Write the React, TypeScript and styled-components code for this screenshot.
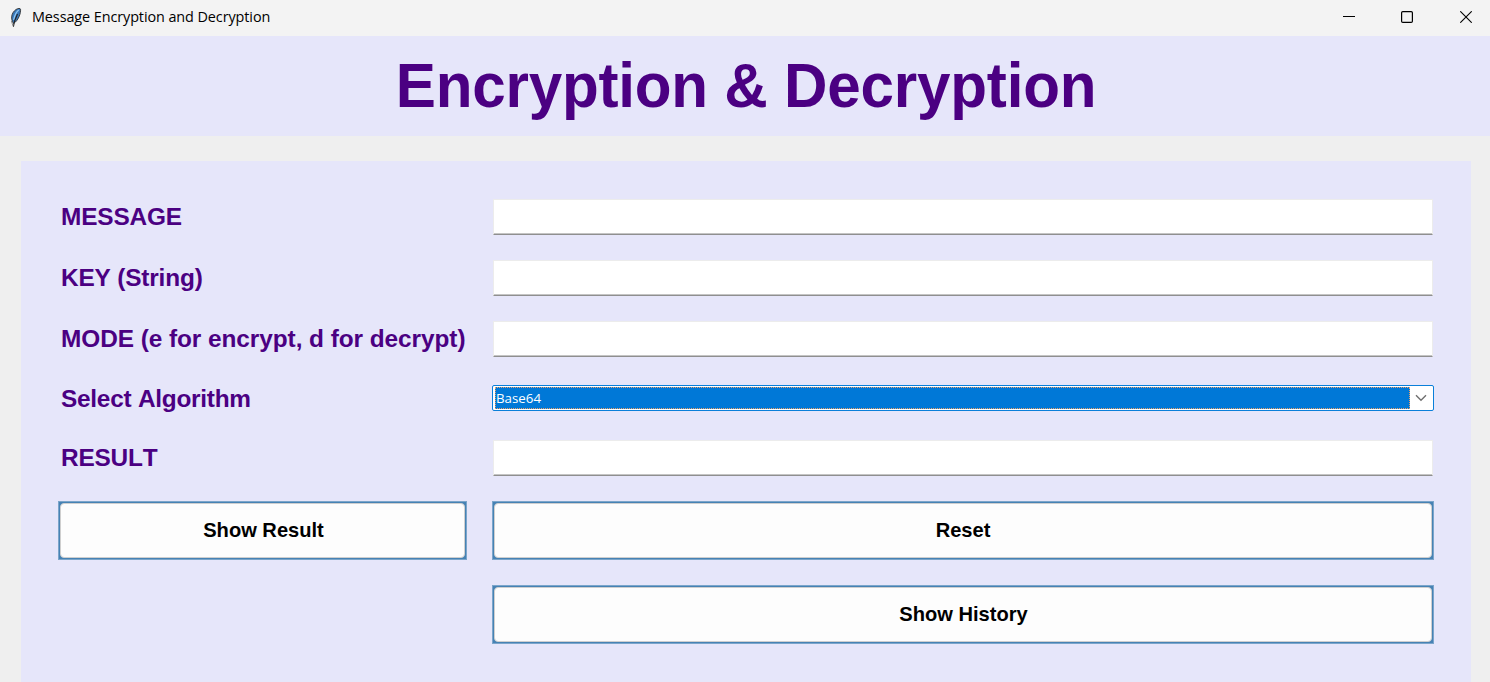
import React from "react";
import styled, { createGlobalStyle } from "styled-components";

const GlobalStyle = createGlobalStyle`
  * { box-sizing: border-box; }
  html, body { margin: 0; padding: 0; }
  body { background: #efefef; overflow: hidden; }
`;

const Window = styled.div`
  display: flex;
  flex-direction: column;
  height: 682px;
  background: #efefef;
  font-family: "Liberation Sans", Arial, sans-serif;
  font-kerning: none;
  overflow: hidden;
`;

const TitleBar = styled.header`
  display: flex;
  align-items: center;
  flex: none;
  height: 36px;
  padding-left: 8px;
  background: #f3f3f3;
`;

const WindowTitle = styled.span`
  flex: 1;
  margin: -2px 0 0 8px;
  font: 14.4px/20px "Open Sans", "Noto Sans", sans-serif;
  letter-spacing: -0.08px;
  color: #000;
`;

const WindowControls = styled.div`
  display: flex;
  margin-right: -5px;
`;

const WindowButton = styled.button`
  display: flex;
  align-items: center;
  justify-content: center;
  width: 58.5px;
  height: 36px;
  padding: 0 0 2px;
  border: 0;
  background: transparent;
`;

const Banner = styled.div`
  display: flex;
  align-items: center;
  justify-content: center;
  flex: none;
  height: 100px;
  padding-left: 2px;
  background: #e6e6fa;
`;

const Heading = styled.h1`
  margin: 0;
  font-size: 60.2px;
  line-height: 70px;
  font-weight: 700;
  letter-spacing: -0.22px;
  color: #4b0082;
  white-space: nowrap;
  transform: scaleY(1.04);
`;

const Panel = styled.form`
  display: grid;
  flex: 1;
  grid-template-columns: 409px 942px;
  grid-template-rows: 36px 36px 36px 33px 36px 59px 59px;
  column-gap: 25px;
  row-gap: 25px;
  align-content: start;
  align-items: center;
  margin: 25px 19px 0 21px;
  padding: 38px 37px 0;
  background: #e6e6fa;
`;

const Label = styled.label<{ $tracking: number }>`
  padding-left: 3px;
  font-size: 24.4px;
  line-height: 28px;
  font-weight: 700;
  letter-spacing: ${(p) => p.$tracking}px;
  color: #4b0082;
  white-space: nowrap;
`;

const Field = styled.input`
  width: 940px;
  height: 36px;
  margin: 0 1px;
  padding: 0 6px;
  border: 1px solid #ececec;
  border-bottom: 1px solid #8f8f8f;
  border-radius: 0;
  outline: none;
  background: #fff;
  box-shadow: inset 0 -1px #c4c4c4;
`;

const Combo = styled.div`
  display: flex;
  height: 26px;
  margin-bottom: 1.5px;
  padding: 1px;
  border: 1px solid #0a7fd9;
  border-radius: 2px;
  background: #fff;
`;

const ComboValue = styled.span`
  flex: 1;
  margin: 0 0 0 1px;
  border: 1px dotted #e8a06a;
  background: #0078d7;
  color: #fff;
  font: 13.3px/20px "Open Sans", "Noto Sans", sans-serif;
`;

const ComboArrow = styled.span`
  display: flex;
  align-items: center;
  justify-content: center;
  width: 22px;
`;

const Button = styled.button<{ $second?: boolean }>`
  grid-column: ${(p) => (p.$second ? 2 : "auto")};
  height: 100%;
  padding: 0;
  border: 1px solid #7ba5ca;
  background: #4682b4;
  font: inherit;
  cursor: pointer;
`;

const ButtonFace = styled.span<{ $shift: number }>`
  display: flex;
  align-items: center;
  justify-content: center;
  height: calc(100% - 2px);
  margin: 1px;
  padding-left: ${(p) => p.$shift}px;
  border: 1px solid #cfcfcf;
  border-radius: 4px;
  background: #fdfdfd;
  color: #000;
  font-size: 20.1px;
  font-weight: 700;
`;

const Feather = () => (
  <svg width="16" height="20" viewBox="0 0 16 20">
    <path d="M5.5 15.5 C2.5 11 3 5 8 1.5 C10 .2 12.4 0 12.5 1.2 C13 5 10.5 12.5 5.5 15.5Z" fill="#3977b8" stroke="#333" strokeWidth=".9" />
    <path d="M10.7 2 C8 4 6.5 8 5.6 12" fill="none" stroke="#8cc5f2" strokeWidth="1.3" />
    <path d="M9.5 6 C7.5 10 6 13 5.4 18.8" fill="none" stroke="#222" strokeWidth="1.1" />
    <path d="M3.4 13 L5 18" stroke="#777" strokeWidth=".8" />
  </svg>
);

const fieldsBefore = [
  { label: "MESSAGE", tracking: -0.15 },
  { label: "KEY (String)", tracking: -0.17 },
  { label: "MODE (e for encrypt, d for decrypt)", tracking: -0.06 },
];

const Entry = ({ label, tracking }: { label: string; tracking: number }) => (
  <>
    <Label $tracking={tracking}>{label}</Label>
    <Field aria-label={label} />
  </>
);

const Action = ({ label, second, shift = 0 }: { label: string; second?: boolean; shift?: number }) => (
  <Button type="button" $second={second}>
    <ButtonFace $shift={shift}>{label}</ButtonFace>
  </Button>
);

export default function App() {
  return (
    <>
      <GlobalStyle />
      <Window>
        <TitleBar>
          <Feather />
          <WindowTitle>Message Encryption and Decryption</WindowTitle>
          <WindowControls>
            <WindowButton aria-label="Minimize">
              <svg width="12" height="12" viewBox="0 0 12 12"><path d="M0 5.5H12" stroke="#000" /></svg>
            </WindowButton>
            <WindowButton aria-label="Maximize">
              <svg width="12" height="12" viewBox="0 0 12 12"><rect x=".6" y=".6" width="10.8" height="10.8" rx="1.2" fill="none" stroke="#000" strokeWidth="1.2" /></svg>
            </WindowButton>
            <WindowButton aria-label="Close">
              <svg width="12" height="12" viewBox="0 0 12 12"><path d="M.3 .3L11.7 11.7M11.7 .3L.3 11.7" stroke="#000" strokeWidth="1.1" /></svg>
            </WindowButton>
          </WindowControls>
        </TitleBar>
        <Banner>
          <Heading>Encryption &amp; Decryption</Heading>
        </Banner>
        <Panel>
          {fieldsBefore.map((field) => (
            <Entry key={field.label} {...field} />
          ))}
          <Label $tracking={-0.25}>Select Algorithm</Label>
          <Combo>
            <ComboValue>Base64</ComboValue>
            <ComboArrow>
              <svg width="12" height="8" viewBox="0 0 12 8"><path d="M1 1.2L6 6.2L11 1.2" fill="none" stroke="#707070" strokeWidth="1.4" /></svg>
            </ComboArrow>
          </Combo>
          <Entry label="RESULT" tracking={-0.18} />
          <Action label="Show Result" shift={2} />
          <Action label="Reset" />
          <Action label="Show History" second shift={1} />
        </Panel>
      </Window>
    </>
  );
}
